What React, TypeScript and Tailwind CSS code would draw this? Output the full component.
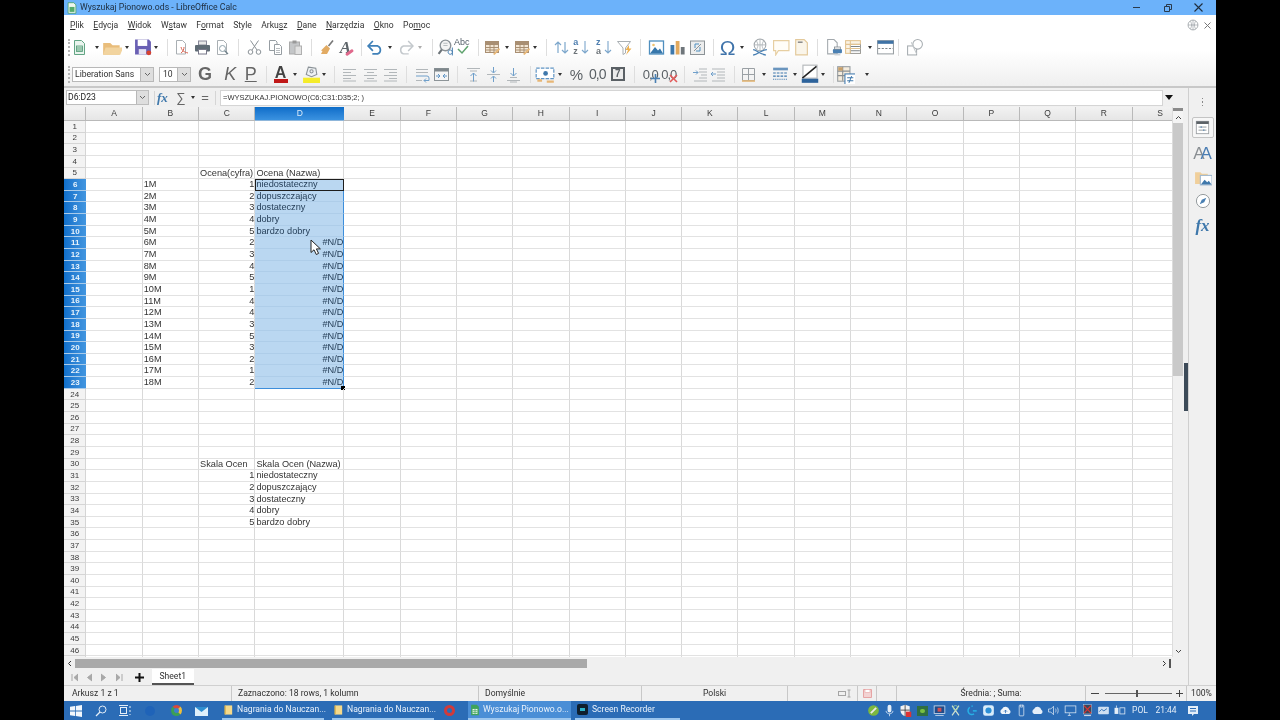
import React from "react";

const GRID_COLS = "grid grid-cols-[22.4px_repeat(3,56.33px)_89px_repeat(15,56.3px)] w-max";
const COLS = ["A","B","C","D","E","F","G","H","I","J","K","L","M","N","O","P","Q","R","S"];

const Ico = ({ s = 17, children }: { s?: number; children: React.ReactNode }) => (
  <svg width={s} height={s} viewBox="0 0 17 17" fill="none" className="shrink-0">{children}</svg>
);
const Sep = () => <div className="w-px h-[17px] bg-[#dedede]" />;
const Drop = () => <div className="w-0 h-0 border-x-[2.5px] border-x-transparent border-t-[3px] border-t-[#333]" />;

type Item = [number, React.ReactNode];
function Strip({ items, start, end }: { items: Item[]; start: number; end: number }) {
  return (
    <div className="flex items-center h-full">
      {items.map(([cx, node], i) => {
        const l = i === 0 ? start : (items[i - 1][0] + cx) / 2;
        const r = i === items.length - 1 ? end : (items[i + 1][0] + cx) / 2;
        return (
          <div key={i} className="flex items-center justify-center shrink-0" style={{ width: r - l }}>
            {node}
          </div>
        );
      })}
    </div>
  );
}

const lines = (ys: [number, number, number][], c = "#b2b7ba") =>
  ys.map(([y, a, b], i) => <path key={i} d={`M${a} ${y}H${b}`} stroke={c} />);

const TableEdit = () => (
  <Ico>
    <rect x="1.5" y="2.5" width="13" height="11" fill="#f3e7d5" stroke="#a98f73" />
    <path d="M1.5 5.5H14.5M1.5 8.5H14.5M1.5 11H14.5M6 3V13M10 3V13" stroke="#a98f73" />
    <rect x="1.5" y="2.5" width="13" height="2.5" fill="#a98f73" />
    <path d="M9 15L15 9L16 10.5L10.5 16Z" fill="#e8b878" />
  </Ico>
);

const Arrow = ({ d }: { d: string }) => <path d={d} stroke="#6f9fca" strokeWidth="1" />;

const LI = "font-['Liberation_Sans',sans-serif]";
const UI = "font-['Roboto','Noto_Sans',sans-serif]";

const row1: Item[] = [
  [81, <Ico><path d="M3.5 1.5H10.5L13.5 4.5V15.5H3.5Z" fill="#eaf4ee" stroke="#63a585" /><rect x="5.5" y="7" width="6" height="5.5" fill="#cfe6d8" stroke="#4f9a74" strokeWidth=".8" /><path d="M5.5 9H11.5M5.5 11H11.5" stroke="#4f9a74" strokeWidth=".8" /></Ico>],
  [97, <Drop />],
  [112, <Ico s={20}><path d="M1 5H7L9 7H15V15H1Z" fill="#e9bd7b" /><path d="M3 9H18L15.5 15H1Z" fill="#f2d49f" /></Ico>],
  [127, <Drop />],
  [143, <Ico s={18}><path d="M1 1.5H14L16 3.5V15.5H1Z" fill="#6a60b4" /><rect x="3.5" y="1.5" width="9" height="6" fill="#fff" /><rect x="4.5" y="10.5" width="7" height="5" fill="#e4e2f2" /><circle cx="14" cy="14" r="2.3" fill="#d8422f" /></Ico>],
  [157, <Drop />],
  [167, <Sep />],
  [179, <Ico><path d="M3.5 1.5H9.5L12.5 4.5V15H3.5Z" fill="#fff" stroke="#a9afb3" /><path d="M8 8C9 12 11 13 15 14M8 14C10 13 11 10 11 8" stroke="#d8614f" /></Ico>],
  [202, <Ico><rect x="4.5" y="2" width="8" height="4" fill="#e8e8e8" stroke="#889" /><rect x="1" y="6" width="15" height="6.5" rx="1" fill="#5f6b75" /><rect x="4.5" y="10.5" width="8" height="4.5" fill="#fff" stroke="#778" /></Ico>],
  [225, <Ico><path d="M3.5 1.5H9.5L12.5 4.5V15.5H3.5Z" fill="#fff" stroke="#a9afb3" /><circle cx="8.5" cy="9.5" r="3" stroke="#8fa2ab" /><path d="M10.7 11.7L14 15" stroke="#6f8089" strokeWidth="1.3" /></Ico>],
  [238, <Sep />],
  [252, <Ico><path d="M4.5 1.5L11 11M12.5 1.5L6 11" stroke="#8a9196" /><circle cx="4.5" cy="13" r="2.3" stroke="#8a9196" /><circle cx="12.5" cy="13" r="2.3" stroke="#8a9196" /></Ico>],
  [275, <Ico><path d="M2.5 1.5H8.5L10 3V11.5H2.5Z" fill="#fff" stroke="#969da2" /><path d="M7.5 5.5H12.5L14.5 7.5V15.5H7.5Z" fill="#fff" stroke="#969da2" /><path d="M9 9.5H13M9 11.5H13M9 13.5H13" stroke="#b8bdc0" /></Ico>],
  [298, <Ico><rect x="2.5" y="3" width="10" height="12" fill="#c4c6c8" stroke="#aaa" /><rect x="5.5" y="1.5" width="4" height="3" fill="#999" /><rect x="8" y="7" width="6.5" height="8.5" fill="#e2e2e2" stroke="#b0b0b0" /></Ico>],
  [312, <Sep />],
  [325, <Ico><path d="M14 1.5L9.5 7" stroke="#777" strokeWidth="1.6" /><path d="M7.5 6L11 9.5L8 15H2L3.5 12L2 11.5Z" fill="#e2ab63" /></Ico>],
  [348, <div className="relative w-[17px] h-[17px] text-[17px] leading-[17px] font-bold italic text-[#5f666b] font-['Liberation_Serif',serif] text-center">A<div className="absolute right-0 bottom-[2px] w-[9px] h-[3px] -rotate-[35deg] bg-[#e0698c] rounded-sm" /></div>],
  [361, <Sep />],
  [375, <Ico s={18}><path d="M2.5 7.5H11A4 4 0 0 1 11 15H6" stroke="#3f80b8" strokeWidth="1.6" /><path d="M6.5 2.8L2 7.5L6.5 12.2" stroke="#3f80b8" strokeWidth="1.6" /></Ico>],
  [390, <Drop />],
  [405, <Ico s={18}><path d="M15.5 7.5H7A4 4 0 0 0 7 15H12" stroke="#c3c8cc" strokeWidth="1.4" /><path d="M11.5 2.8L16 7.5L11.5 12.2" stroke="#c3c8cc" strokeWidth="1.4" /></Ico>],
  [421, <div className="opacity-40"><Drop /></div>],
  [432, <Sep />],
  [443, <Ico s={18}><circle cx="8" cy="7" r="5" fill="#f4f4f4" stroke="#8b9297" strokeWidth="1.3" /><path d="M4.5 11L1.5 15" stroke="#6d7479" strokeWidth="2" /><path d="M6 5H10M6 7H10" stroke="#b8bdc0" /><path d="M14.5 9V16.5M14.5 13.5A2 2 0 1 0 14.4 14" stroke="#3f78ab" strokeWidth=".9" /></Ico>],
  [465, <div className="relative w-[18px] h-[18px]"><span className={`absolute -top-[2px] left-0 text-[9px] ${LI} text-[#55606a]`}>Abc</span><svg width="18" height="18" className="absolute left-0 top-0" fill="none"><path d="M4 11L8 15L14 8" stroke="#5fa36e" strokeWidth="1.5" /></svg></div>],
  [478, <Sep />],
  [492, <TableEdit />],
  [507, <Drop />],
  [522, <TableEdit />],
  [537, <Drop />],
  [545, <Sep />],
  [559, <Ico><path d="M5 14V3M2 6L5 3L8 6" stroke="#7da7cc" strokeWidth="1.2" /><path d="M12 3V14M9 11L12 14L15 11" stroke="#7da7cc" strokeWidth="1.2" /></Ico>],
  [581, <div className={`relative w-[18px] h-[18px] ${LI} text-[#4f7fb0] text-[9px] leading-[8px] font-semibold`}><span className="absolute left-[1px] top-0">a</span><span className="absolute left-[1px] top-[9px] text-[#6d7479]">z</span><svg width="18" height="18" fill="none" className="absolute left-0 top-0"><path d="M13 3V15M10 12L13 15L16 12" stroke="#7da7cc" strokeWidth="1.1" /></svg></div>],
  [604, <div className={`relative w-[18px] h-[18px] ${LI} text-[#4f7fb0] text-[9px] leading-[8px] font-semibold`}><span className="absolute left-[1px] top-0">z</span><span className="absolute left-[1px] top-[9px] text-[#6d7479]">a</span><svg width="18" height="18" fill="none" className="absolute left-0 top-0"><path d="M13 3V15M10 12L13 15L16 12" stroke="#7da7cc" strokeWidth="1.1" /></svg></div>],
  [627, <Ico><path d="M1.5 2.5H14.5L9.5 9V14L7 15.5V9Z" fill="#fff" stroke="#a9afb3" /><path d="M13 6L9.5 11H12L10 16L15.5 9.5H13Z" fill="#eeb04e" /></Ico>],
  [640, <Sep />],
  [655, <Ico><rect x="1.5" y="2" width="14" height="13" fill="#fff" stroke="#4f8fbf" strokeWidth="1.3" /><path d="M2 14.5L7 8L10 11.5L12 9.5L15 14.5Z" fill="#3777ab" /><circle cx="5.5" cy="6" r="1.3" fill="#f1c36e" /></Ico>],
  [677, <Ico><rect x="1.5" y="6" width="3.8" height="9.5" fill="#3d78ac" /><rect x="6.7" y="2" width="3.8" height="13.5" fill="#e2a95e" /><rect x="11.8" y="8" width="3.8" height="7.5" fill="#6f767b" /></Ico>],
  [700, <Ico><rect x="1.5" y="2" width="14" height="13.5" fill="#eceded" stroke="#8c9397" /><path d="M6 9V5H10M11 8V12H7" stroke="#4f8fbf" /><path d="M5 12L12 5" stroke="#8c9397" /></Ico>],
  [714, <Sep />],
  [727, <span className={`text-[#3f73aa] text-[21px] leading-[21px] ${LI}`}>Ω</span>],
  [742, <Drop />],
  [758, <Ico s={18}><circle cx="8.5" cy="6.5" r="5.5" stroke="#a2a8ac" /><path d="M3 6.5H14M8.5 1V12M5 2.5C7 6 7 8 5 11M12 2.5C10 6 10 8 12 11" stroke="#a2a8ac" strokeWidth=".7" /><path d="M2 11C5 11 9 16 14 16M2 16C6 16 10 11 15 11" stroke="#4a80b3" strokeWidth="1.3" /></Ico>],
  [781, <Ico s={18}><path d="M1.5 2.5H16V12H6L3.5 16V12H1.5Z" fill="#fffdf8" stroke="#e7cfa2" strokeWidth="1.1" /></Ico>],
  [803, <Ico s={18}><path d="M3.5 1.5H11.5L14.5 4.5V16H3.5Z" fill="#faf5ea" stroke="#e3c99b" strokeWidth="1.1" /><path d="M5.5 4H10" stroke="#8d8d8d" strokeWidth="1.5" /></Ico>],
  [818, <Sep />],
  [832, <Ico s={18}><path d="M2.5 1.5H8.5L11.5 4.5V15H2.5Z" fill="#fff" stroke="#a3a9ad" /><rect x="7.5" y="10.5" width="8.5" height="4" rx="1" fill="#4a80b3" /><rect x="9" y="8.5" width="5.5" height="2" fill="#fff" stroke="#7d8488" strokeWidth=".7" /><path d="M9 15H14.5V16.5H9Z" fill="#cfd4d8" /></Ico>],
  [855, <Ico s={18}><rect x="1.5" y="2.5" width="14" height="12" fill="#fbf3e4" stroke="#e2c391" /><rect x="6" y="6" width="9.5" height="8.5" fill="#fff" stroke="#8b8f92" strokeWidth=".8" /><path d="M1.5 6H15.5M1.5 10H15.5M6 2.5V14.5" stroke="#e2c391" /><path d="M6.5 8H15M6.5 12H15" stroke="#7d8488" /></Ico>],
  [869, <Drop />],
  [885, <Ico s={18}><rect x="1.5" y="2.5" width="15" height="12.5" fill="#fff" stroke="#9aa0a4" /><rect x="1.5" y="2.5" width="15" height="3" fill="#3f73a6" /><path d="M2 10H16" stroke="#7d8488" strokeDasharray="2 1.4" /></Ico>],
  [899, <Sep />],
  [912, <Ico s={18}><rect x="1.5" y="7.5" width="8.5" height="8.5" fill="#fff" stroke="#a7adb1" /><circle cx="11" cy="6" r="4.5" fill="#fff" stroke="#a7adb1" /><path d="M5 4L10 15" stroke="#c3c8cb" /></Ico>],
];

const LineIco = ({ ys, arrow }: { ys: [number, number, number][]; arrow?: string }) => (
  <Ico>{lines(ys)}{arrow ? <Arrow d={arrow} /> : null}</Ico>
);

const row2: Item[] = [
  [208, <span className={`text-[18px] font-bold text-[#666] leading-none ${LI}`}>G</span>],
  [230, <span className={`text-[18px] italic text-[#666] leading-none ${LI}`}>K</span>],
  [253, <span className={`text-[18px] underline text-[#666] leading-none ${LI}`}>P</span>],
  [267, <Sep />],
  [280, <div className="relative w-[17px] h-[19px] flex justify-center"><span className={`text-[16px] leading-[15px] font-bold text-[#444] ${LI}`}>A</span><div className="absolute bottom-[1px] left-0 w-full h-[4px] bg-[#c01818]" /></div>],
  [295, <Drop />],
  [311, <Ico s={18}><path d="M6 2L13 3L14 9L9 11L4 9Z" fill="#eef1f3" stroke="#8a9196" /><circle cx="9" cy="6" r="1.5" stroke="#8a9196" /><rect x="1" y="12" width="16" height="5" fill="#f5ec2a" /></Ico>],
  [325, <Drop />],
  [333, <Sep />],
  [347, <LineIco ys={[[3.5,2,15],[6.5,2,10],[9.5,2,15],[12.5,2,10],[15,2,15]]} />],
  [370, <LineIco ys={[[3.5,2,15],[6.5,5,12],[9.5,2,15],[12.5,5,12],[15,2,15]]} />],
  [393, <LineIco ys={[[3.5,2,15],[6.5,7,15],[9.5,2,15],[12.5,7,15],[15,2,15]]} />],
  [407, <Sep />],
  [420, <LineIco ys={[[3.5,2,14],[6.5,2,14],[14.5,2,8]]} arrow="M2 10H13Q15 10 15 12V14.5H10M12 12.5L10 14.5L12 16.5" />],
  [443, <Ico><rect x="1.5" y="2.5" width="14" height="12" fill="#f5f5f5" stroke="#8d9498" /><rect x="1.5" y="2.5" width="14" height="3" fill="#7f878c" /><path d="M3 10H7M5 8L7 10L5 12M14 10H10M12 8L10 10L12 12" stroke="#5f94c4" /></Ico>],
  [458, <Sep />],
  [471, <LineIco ys={[[2.5,2,15],[5,5,12],[15,5,12]]} arrow="M8.5 15.5V7M5.5 10L8.5 7L11.5 10" />],
  [493, <LineIco ys={[[8.5,2,15]]} arrow="M8.5 1V6.5M6 4.5L8.5 7L11 4.5M8.5 16V10.5M6 12.5L8.5 10L11 12.5" />],
  [516, <LineIco ys={[[11.5,5,12],[14.5,2,15],[16,5,12]]} arrow="M8.5 2V10M5.5 7L8.5 10L11.5 7" />],
  [530, <Sep />],
  [545, <Ico s={20}><rect x="1" y="3.5" width="15" height="9" fill="#fff" stroke="#5f94c4" strokeDasharray="3 1" /><circle cx="9" cy="8" r="2" fill="#3f78ab" /><path d="M2 14H6M10 15H16" stroke="#e7b675" strokeWidth="2" /></Ico>],
  [559, <Drop />],
  [575, <span className={`text-[15px] leading-none text-[#5a6065] ${LI}`}>%</span>],
  [597, <span className={`text-[14px] leading-none text-[#5a6065] ${LI} tracking-[-1px]`}>0,0</span>],
  [620, <div className={`w-[14px] h-[14px] border-2 border-[#5a6065] bg-[#ebebeb] flex items-center justify-center text-[10px] leading-none font-bold text-[#5a6065] ${LI}`}>7</div>],
  [634, <Sep />],
  [648, <div className={`relative text-[13px] leading-none text-[#5a6065] ${LI} tracking-[-1px]`}>0,0<svg width="9" height="9" fill="none" className="absolute -right-[2px] -bottom-[2px]"><path d="M4.5 0V9M0 4.5H9" stroke="#4a80b3" strokeWidth="1.6" /></svg></div>],
  [671, <div className={`relative text-[13px] leading-none text-[#5a6065] ${LI} tracking-[-1px]`}>0,0<svg width="9" height="9" fill="none" className="absolute -right-[2px] -bottom-[2px]"><path d="M1 1L8 8M8 1L1 8" stroke="#e25a5a" strokeWidth="1.6" /></svg></div>],
  [685, <Sep />],
  [698, <LineIco ys={[[3,7,15],[6,7,15],[9,9,15],[12,7,15],[15,2,15]]} arrow="M1 6.5H6M4 4.5L6 6.5L4 8.5" />],
  [721, <LineIco ys={[[3,2,15],[6,7,15],[9,7,15],[12,7,15],[15,2,15]]} arrow="M6 8H1M3 6L1 8L3 10" />],
  [735, <Sep />],
  [748, <Ico><path d="M2.5 2.5H14.5V14.5H2.5ZM8.5 2.5V14.5M2.5 8.5H14.5" stroke="#9aa0a4" /><path d="M2 15H15" stroke="#e3b675" strokeWidth="1.6" /></Ico>],
  [764, <Drop />],
  [781, <Ico s={18}><path d="M2 3H16M2 4.5H16" stroke="#3d76ac" /><path d="M2 7.5H16M2 10.5H16" stroke="#3d76ac" strokeDasharray="2.5 1" /><path d="M2 13.5H16" stroke="#3d76ac" strokeDasharray="1 1" /></Ico>],
  [795, <Drop />],
  [809, <Ico s={20}><rect x="2.5" y="1" width="12" height="11" fill="#fff" stroke="#b6babd" /><path d="M2 12L14 2" stroke="#222" strokeWidth="1.3" /><rect x="1.5" y="12.5" width="14" height="3.5" fill="#2d639b" /></Ico>],
  [825, <Drop />],
  [832, <Sep />],
  [845, <Ico s={19}><rect x="1.5" y="1.5" width="11" height="13" fill="#f5ecdd" stroke="#9aa0a4" /><path d="M1.5 5.5H12.5M1.5 9.5H12.5M6 1.5V14" stroke="#8a8f92" /><rect x="2" y="2" width="4" height="3" fill="#c9a06a" /><rect x="8" y="8" width="9.5" height="9.5" fill="#fff" stroke="#4a80b3" /><path d="M10 11.5H15.5M10 14H15.5M14 10L11.5 16" stroke="#3f78ab" strokeWidth=".9" /></Ico>],
  [861, <Drop />],
];

function MenuItem({ pre, u, post }: { pre?: string; u?: string; post?: string }) {
  return <span>{pre}{u ? <span className="underline">{u}</span> : null}{post}</span>;
}

const bVals: Record<number, string> = {};
for (let i = 0; i < 18; i++) bVals[6 + i] = `${i + 1}M`;
const cVals: Record<number, string> = {};
[1,2,3,4,5,2,3,4,5,1,4,4,3,5,3,2,1,2].forEach((v, i) => (cVals[6 + i] = String(v)));
const names = ["niedostateczny","dopuszczający","dostateczny","dobry","bardzo dobry"];

function cellText(r: number, c: number): { t: string; right?: boolean } | null {
  if (c === 1 && bVals[r]) return { t: bVals[r] };
  if (c === 2) {
    if (r === 5) return { t: "Ocena(cyfra)" };
    if (r === 30) return { t: "Skala Ocen" };
    if (cVals[r]) return { t: cVals[r], right: true };
    if (r >= 31 && r <= 35) return { t: String(r - 30), right: true };
  }
  if (c === 3) {
    if (r === 5) return { t: "Ocena (Nazwa)" };
    if (r === 30) return { t: "Skala Ocen (Nazwa)" };
    if (r >= 6 && r <= 10) return { t: names[r - 6] };
    if (r >= 11 && r <= 23) return { t: "#N/D", right: true };
    if (r >= 31 && r <= 35) return { t: names[r - 31] };
  }
  return null;
}

function SheetGrid() {
  const rows = Array.from({ length: 47 }, (_, i) => i + 1);
  return (
    <div className="relative flex-1 overflow-hidden bg-white">
      <div className={`${GRID_COLS} h-[14px] ${LI} text-[8.5px] text-[#3a3a3a]`}>
        <div className="bg-gradient-to-b from-[#f2f2f2] to-[#e6e6e6] border-r border-b border-[#b9b9b9]" />
        {COLS.map((c) =>
          c === "D" ? (
            <div key={c} className="bg-gradient-to-b from-[#0b6dc9] to-[#3a92e0] text-[#dcecfa] border-b border-[#8fb6da] flex items-center justify-center">{c}</div>
          ) : (
            <div key={c} className="bg-gradient-to-b from-[#f2f2f2] to-[#e6e6e6] border-r border-b border-[#b9b9b9] flex items-center justify-center">{c}</div>
          )
        )}
      </div>
      <div className={`${GRID_COLS} auto-rows-[11.65px] ${LI} text-[9.2px] leading-[11px] text-[#333]`}>
        {rows.flatMap((r) => {
          const sel = r >= 6 && r <= 23;
          return [
            <div
              key={`h${r}`}
              className={
                sel
                  ? "bg-gradient-to-r from-[#0f6fca] to-[#4296e0] text-[#eaf4fc] font-bold text-[8px] flex items-center justify-center border-b border-[#a9cbea]"
                  : "bg-[#f3f3f3] text-[#3a3a3a] text-[8px] flex items-center justify-center border-r border-b border-[#d5d5d5]"
              }
            >
              {r}
            </div>,
            ...COLS.map((_, c) => {
              const ct = cellText(r, c);
              const isD = c === 3 && sel;
              const isCSel = c === 2 && sel;
              const first = isD && r === 6;
              const last = isD && r === 23;
              return (
                <div
                  key={`${r}-${c}`}
                  className={[
                    "relative whitespace-nowrap pl-[1px]",
                    ct?.right ? "text-right" : "text-left",
                    isD ? "bg-[#bad7f1] border-r border-r-[#3d8edb] text-[#27405a]" : "border-r border-r-[#d9d9d9]",
                    last ? "border-b border-b-[#3d8edb]" : isD ? "border-b border-b-[#aecde9]" : "border-b border-b-[#e2e2e2]",
                    isCSel ? "border-r-[#3d8edb]" : "",
                    first ? "outline-[1.5px] outline-solid outline-[#1d1d1d] -outline-offset-1 z-10" : "",
                  ].join(" ")}
                >
                  {ct?.t}
                  {last ? <div className="absolute -right-[2px] -bottom-[2px] w-[4px] h-[4px] bg-black" /> : null}
                </div>
              );
            }),
          ];
        })}
      </div>
      {/* mouse pointer */}
      <svg width="13" height="17" viewBox="0 0 13 17" className="absolute left-[246px] top-[132px] z-20">
        <path d="M1 1V13.5L4 10.8L6.3 15.5L8.6 14.4L6.4 9.9H10.4Z" fill="#fff" stroke="#222" strokeWidth="1" />
      </svg>
    </div>
  );
}

function VScroll() {
  return (
    <div className="w-[11px] shrink-0 flex flex-col bg-[#f0f0f0] border-l border-[#dcdcdc]">
      <div className="h-[3px] mt-[1px] bg-[#8a8a8a]" />
      <div className="h-[12px] flex items-center justify-center bg-[#f4f4f4]">
        <svg width="7" height="5" fill="none"><path d="M1 4L3.5 1.5L6 4" stroke="#444" /></svg>
      </div>
      <div className="h-[253px] bg-[#c9c9c9]" />
      <div className="flex-1" />
      <div className="h-[12px] flex items-center justify-center">
        <svg width="7" height="5" fill="none"><path d="M1 1L3.5 3.5L6 1" stroke="#444" /></svg>
      </div>
    </div>
  );
}

function Sidebar() {
  return (
    <div className="w-[28px] shrink-0 bg-[#f0f0f0] border-l border-[#cfcfcf] flex flex-col items-center">
      <div className="h-[30px] flex flex-col items-center justify-center gap-[2px] mt-[-1px]">
        <div className="w-[1.5px] h-[1.5px] bg-[#888]" />
        <div className="w-[1.5px] h-[1.5px] bg-[#888]" />
        <div className="w-[1.5px] h-[1.5px] bg-[#888]" />
      </div>
      <div className="w-[22px] h-[21px] border border-[#c4c4c4] rounded-[2px] bg-[#f7f7f7] flex items-center justify-center">
        <Ico s={15}><rect x="1.5" y="1.5" width="14" height="14" fill="#fff" stroke="#9b9fa2" /><rect x="1.5" y="1.5" width="14" height="3" fill="#5b6166" /><path d="M4 8H13M4 11.5H13" stroke="#8a8f93" /><path d="M7 7V9M10 10.5V12.5" stroke="#4a80b3" /></Ico>
      </div>
      <div className={`mt-[3px] h-[24px] flex items-center text-[17px] leading-none ${LI} text-[#4a7db3] tracking-[-4px] pr-[4px]`}><span className="text-[#8a8f93]">A</span><span>A</span></div>
      <div className="h-[24px] flex items-center">
        <Ico s={18}><path d="M1 4H6L7.5 5.5H13V15H1Z" fill="#f0cf9b" /><rect x="6" y="7" width="11" height="9" fill="#fff" stroke="#9fb8cf" /><path d="M6.5 15.5L10 11L12.5 13.5L14 12L16.5 15.5Z" fill="#3f78ab" /></Ico>
      </div>
      <div className="h-[23px] flex items-center">
        <Ico s={16}><circle cx="8.5" cy="8.5" r="7" fill="#fff" stroke="#8f9599" /><path d="M12 5L9.8 9.8L5 12L7.2 7.2Z" fill="#4a80b3" /></Ico>
      </div>
      <div className="h-[26px] flex items-center text-[17px] italic font-bold text-[#3f78ab] font-['Liberation_Serif',serif] leading-none">fx</div>
    </div>
  );
}

const tray: Item[] = [
  [874, <Ico s={13}><circle cx="8.5" cy="8.5" r="7" fill="#7cb83f" /><path d="M5 12L12 5" stroke="#e8e8e8" strokeWidth="2.4" /></Ico>],
  [889, <Ico s={13}><rect x="6" y="1" width="5" height="10" rx="2.5" fill="#e4eef8" /><path d="M4 9C4 14 13 14 13 9M8.5 13V16" stroke="#e4eef8" /></Ico>],
  [905, <Ico s={13}><path d="M2 3L8 1L14 3V9C14 12 11 15 8 16C5 15 2 12 2 9Z" fill="#f2f2f2" /><path d="M8 1V16M2 8H14" stroke="#2a2a2a" /><rect x="9" y="10" width="7" height="7" fill="#d33" /></Ico>],
  [923, <div className="w-[11px] h-[10px] bg-[#2f6f42] flex items-center justify-center"><div className="w-[5px] h-[4px] rounded-full bg-[#78c043]" /></div>],
  [939, <Ico s={13}><rect x="1.5" y="2.5" width="14" height="10" fill="#1f4c8a" stroke="#d9e5f2" /><rect x="6" y="5" width="5" height="5" fill="#d34f4f" /><path d="M3 15H14" stroke="#d9e5f2" /></Ico>],
  [956, <Ico s={13}><path d="M4 2L13 15M13 2L4 15" stroke="#cfe1cf" strokeWidth="1.6" /><circle cx="8.5" cy="5" r="3" stroke="#9fd09f" /></Ico>],
  [972, <Ico s={13}><path d="M8 2V3.5M10.5 13A5 5 0 1 1 5 4.5" stroke="#27b0e6" strokeWidth="2" /><path d="M9 9H14" stroke="#27b0e6" strokeWidth="2" /></Ico>],
  [988, <Ico s={13}><rect x="1.5" y="1.5" width="14" height="14" rx="3" fill="#d8ecfa" /><circle cx="8.5" cy="8.5" r="4" fill="#2b8fd6" /></Ico>],
  [1005, <Ico s={13}><path d="M4 13A3.5 3.5 0 0 1 4 6.5A5 5 0 0 1 13.5 7.5A3 3 0 0 1 13 13Z" fill="#f0f5fa" /><path d="M8.5 12V8M6.5 10L8.5 8L10.5 10" stroke="#2b6cb5" /></Ico>],
  [1022, <Ico s={13}><rect x="5.5" y="1.5" width="6" height="14" rx="1" stroke="#d9e5f2" /><path d="M7 1V4H10V1" stroke="#d9e5f2" /></Ico>],
  [1038, <Ico s={13}><path d="M4 13A3.5 3.5 0 0 1 4 6.5A5 5 0 0 1 13.5 7.5A3 3 0 0 1 13 13Z" fill="#e4eef8" /></Ico>],
  [1053, <Ico s={13}><path d="M2 6.5H5L8.5 3V14L5 10.5H2Z" stroke="#d9e5f2" /><path d="M11 6C12 7.5 12 9.5 11 11M13.5 4.5C15 7 15 10 13.5 12.5" stroke="#d9e5f2" /></Ico>],
  [1070, <Ico s={13}><rect x="1.5" y="2.5" width="14" height="9" stroke="#d9e5f2" /><path d="M5 15H9M7 12V15" stroke="#d9e5f2" /></Ico>],
  [1087, <Ico s={13}><rect x="3" y="1" width="11" height="12" fill="#38475c" stroke="#c9d6e6" strokeWidth=".6" /><path d="M4 2L13 12M13 2L4 12" stroke="#d33" strokeWidth="1.5" /><path d="M4 15H13" stroke="#c9d6e6" strokeWidth="1.6" /></Ico>],
  [1104, <Ico s={13}><rect x="1.5" y="3.5" width="14" height="10" rx="1" fill="#cfe0f2" /><path d="M3 10L6 7L9 9L13 6" stroke="#2b6cb5" strokeWidth="1.2" /></Ico>],
  [1119, <Ico s={13}><path d="M2 5H7V13H2Z" fill="#e4eef8" /><rect x="9" y="5" width="6.5" height="8" stroke="#e4eef8" /><path d="M4.5 5V2" stroke="#e4eef8" /></Ico>],
];

function TaskBtn({ kind, label, w, active }: { kind: "folder" | "calc" | "rec"; label: string; w: string; active?: boolean }) {
  return (
    <div className={`${w} shrink-0 h-full flex items-center gap-[2px] pl-[1px] border-b-2 border-b-[#9cc6ee] ${active ? "bg-[#4a8ed6]" : ""}`}>
      {kind === "folder" ? (
        <Ico s={12}><path d="M3 2H13V15H3Z" fill="#f5d98a" /><path d="M3 2V15" stroke="#e0b850" strokeWidth="2" /></Ico>
      ) : kind === "calc" ? (
        <Ico s={12}><path d="M3 1H11L14 4V16H3Z" fill="#3fa35a" /><rect x="5" y="7" width="7" height="7" fill="#e8f5ea" /><path d="M5 9.5H12M5 12H12M8.5 7V14" stroke="#3fa35a" /></Ico>
      ) : (
        <div className="w-[11px] h-[11px] rounded-[2px] bg-[#0f1f2e] flex items-center justify-center mr-[2px] ml-[1px]"><div className="w-[5px] h-[3px] bg-[#2bb2c9]" /></div>
      )}
      <span className="text-[8.6px] whitespace-nowrap text-[#eaf2fb]">{label}</span>
    </div>
  );
}

const FieldArrow = ({ w }: { w: string }) => (
  <div className={`${w} h-full bg-[#dedede] border-l border-[#b8b8b8] flex items-center justify-center`}>
    <svg width="7" height="5" fill="none"><path d="M1 1L3.5 3.5L6 1" stroke="#666" /></svg>
  </div>
);

const Handle = () => (
  <div className="w-[6px] h-[17px] flex justify-end shrink-0"><div className="w-[2px] h-full border-l-2 border-dotted border-[#b5b5b5]" /></div>
);

export default function App() {
  return (
    <div className={`w-[1280px] h-[720px] bg-black flex justify-center overflow-hidden blur-[0.3px] ${UI}`}>
      <div className="w-[1152px] h-full flex flex-col bg-[#f0f0f0]">
        {/* title bar */}
        <div className="h-[15px] shrink-0 bg-[#6cb2fa] flex items-center pl-[2px] text-[#1d2c3c]">
          <Ico s={12}><path d="M3 1H11L14 4V16H3Z" fill="#eef7ef" stroke="#3c9a55" /><rect x="5" y="7" width="7" height="7" fill="#55ac6c" /></Ico>
          <span className="ml-[2px] text-[8.7px] whitespace-nowrap">Wyszukaj Pionowo.ods - LibreOffice Calc</span>
          <div className="ml-auto flex items-center">
            <div className="w-[31px] flex justify-center"><div className="w-[7px] h-px bg-[#2a3a4c]" /></div>
            <div className="w-[31px] flex justify-center">
              <svg width="8" height="8" fill="none"><path d="M2.5 2V.5H7.5V5.5H6M.5 2.5H5.5V7.5H.5Z" stroke="#2a3a4c" /></svg>
            </div>
            <div className="w-[31px] flex justify-center mr-[2px]">
              <svg width="9" height="9" fill="none"><path d="M.5.5L8.5 8.5M8.5.5L.5 8.5" stroke="#1f2d3d" strokeWidth="1.1" /></svg>
            </div>
          </div>
        </div>
        {/* toolbar block */}
        <div className="h-[73px] shrink-0 bg-gradient-to-b from-white via-white to-[#efefef] border-b-2 border-[#c8c8c8] flex flex-col">
          <div className="h-[20px] shrink-0 flex items-center pl-[6px] gap-[9.4px] text-[8.6px] text-[#333] whitespace-nowrap">
            <MenuItem u="P" post="lik" />
            <MenuItem u="E" post="dycja" />
            <MenuItem u="W" post="idok" />
            <MenuItem pre="W" u="s" post="taw" />
            <MenuItem pre="F" u="o" post="rmat" />
            <MenuItem post="Style" />
            <MenuItem pre="Arku" u="s" post="z" />
            <MenuItem u="D" post="ane" />
            <MenuItem u="N" post="arzędzia" />
            <MenuItem u="O" post="kno" />
            <MenuItem pre="Po" u="m" post="oc" />
            <div className="ml-auto flex items-center gap-[5px] pr-[5px]">
              <Ico s={12}><circle cx="8.5" cy="8.5" r="7" stroke="#8a9196" /><path d="M1.5 8.5H15.5M8.5 1.5V15.5M5 3C7 7 7 10 5 14M12 3C10 7 10 10 12 14" stroke="#8a9196" strokeWidth=".8" /></Ico>
              <svg width="7" height="7" fill="none"><path d="M.5.5L6.5 6.5M6.5.5L.5 6.5" stroke="#777" /></svg>
            </div>
          </div>
          <div className="h-[24px] shrink-0 flex items-center">
            <Handle />
            <Strip items={row1} start={70} end={925} />
          </div>
          <div className="h-[27px] shrink-0 pt-[3px] flex items-center">
            <Handle />
            <div className={`ml-[2px] w-[82px] h-[15px] shrink-0 flex items-center bg-white border border-[#b8b8b8] text-[8.6px] text-[#333] pl-[2px] ${UI}`}>
              <span className="flex-1">Liberation Sans</span>
              <FieldArrow w="w-[13px]" />
            </div>
            <div className={`ml-[5px] w-[32px] h-[15px] shrink-0 flex items-center bg-white border border-[#b8b8b8] text-[8.6px] text-[#333] pl-[3px] ${UI}`}>
              <span className="flex-1">10</span>
              <FieldArrow w="w-[13px]" />
            </div>
            <Strip items={row2} start={191} end={880} />
          </div>
        </div>
        {/* body */}
        <div className="flex-1 min-h-0 flex">
          <div className="w-[1120px] shrink-0 flex flex-col">
            {/* formula bar */}
            <div className="h-[19px] shrink-0 flex items-center bg-[#f0f0f0]">
              <div className={`ml-[2px] w-[83px] h-[15px] shrink-0 flex items-center bg-white border border-[#bdbdbd] text-[8.6px] text-[#222] pl-[1px] ${UI}`}>
                <span className="flex-1">D6:D23</span>
                <FieldArrow w="w-[12px]" />
              </div>
              <div className="w-[5px] shrink-0" />
              <div className="w-px h-[14px] bg-[#d5d5d5] shrink-0" />
              <div className="w-[2px] shrink-0" />
              <span className="w-[14px] shrink-0 italic font-bold text-[13px] leading-none text-[#3f78ab] font-['Liberation_Serif',serif]">fx</span>
              <span className={`w-[16px] ml-[2px] shrink-0 text-center text-[13px] leading-none text-[#666] ${LI}`}>∑</span>
              <div className="w-[8px] shrink-0 flex justify-center"><Drop /></div>
              <span className={`w-[16px] shrink-0 text-center text-[13px] leading-none text-[#666] ${LI}`}>=</span>
              <div className="w-[2px] shrink-0" />
              <div className="w-px h-[14px] bg-[#d5d5d5] shrink-0" />
              <div className={`ml-[4px] w-[943px] h-[16px] shrink-0 bg-white border border-[#d5d5d5] flex items-center pl-[2px] text-[7.5px] text-[#333] ${LI}`}>=WYSZUKAJ.PIONOWO(C6;C31:D35;2; )</div>
              <div className="flex-1 flex justify-center mr-[10px]"><div className="w-0 h-0 border-x-[4.5px] border-x-transparent border-t-[5px] border-t-[#111]" /></div>
            </div>
            <div className="flex-1 min-h-0 flex">
              <SheetGrid />
              <VScroll />
              <div className="w-[1px] shrink-0" />
            </div>
            {/* hscroll */}
            <div className="h-[12px] shrink-0 flex items-center bg-[#f0f0f0]">
              <div className="w-[11px] flex justify-center"><svg width="5" height="7" fill="none"><path d="M4 1L1.5 3.5L4 6" stroke="#333" /></svg></div>
              <div className="w-[512px] h-[9px] bg-[#a9a9a9]" />
              <div className="flex-1" />
              <div className="w-[10px] flex justify-center"><svg width="5" height="7" fill="none"><path d="M1 1L3.5 3.5L1 6" stroke="#333" /></svg></div>
              <div className="w-[2px] h-[9px] bg-[#555]" />
              <div className="w-[13px]" />
            </div>
            {/* tabs */}
            <div className="h-[16px] shrink-0 flex items-center bg-[#f0f0f0]">
              <div className="w-[3px]" />
              {[
                "M3 1V8M9 1L5 4.5L9 8",
                "M8 1L3.5 4.5L8 8",
                "M3 1L7.5 4.5L3 8",
                "M9 1V8M3 1L7 4.5L3 8",
              ].map((d, i) => (
                <div key={i} className="w-[14.7px] flex justify-center">
                  <svg width="11" height="9"><path d={d} stroke="#a8a8a8" fill="#a8a8a8" /></svg>
                </div>
              ))}
              <div className="w-[8px]" />
              <svg width="11" height="11" fill="none"><path d="M5.5 1V10M1 5.5H10" stroke="#111" strokeWidth="2" /></svg>
              <div className="w-[7px]" />
              <div className={`w-[42px] h-[16px] bg-white border-b-2 border-[#555] flex items-center justify-center text-[8.6px] text-[#333] ${UI}`}>Sheet1</div>
            </div>
          </div>
          {/* splitter */}
          <div className="w-[4px] shrink-0 flex items-center bg-[#f0f0f0]">
            <div className="w-[4px] h-[48px] bg-[#3c4a58]" />
          </div>
          <Sidebar />
        </div>
        {/* status */}
        <div className="h-[16px] shrink-0 bg-[#f0f0f0] border-t border-[#d0d0d0] flex items-center text-[8.6px] text-[#2f2f2f] whitespace-nowrap">
          <div className="w-[168px] pl-[8px] border-r border-[#c8c8c8] h-full flex items-center">Arkusz 1 z 1</div>
          <div className="w-[247px] pl-[6px] border-r border-[#c8c8c8] h-full flex items-center">Zaznaczono: 18 rows, 1 kolumn</div>
          <div className="w-[163px] pl-[6px] border-r border-[#c8c8c8] h-full flex items-center">Domyślnie</div>
          <div className="w-[146px] border-r border-[#c8c8c8] h-full flex items-center justify-center">Polski</div>
          <div className="w-[70px] h-full flex items-center justify-end border-r border-[#c8c8c8] pr-[6px] text-[#999]">
            <svg width="13" height="9" fill="none"><rect x=".5" y="2.5" width="7" height="4" stroke="#a5a5a5" /><path d="M11 1V8M9.5 1H12.5M9.5 8H12.5" stroke="#a5a5a5" /></svg>
          </div>
          <div className="w-[19px] h-full flex items-center justify-center border-r border-[#c8c8c8]">
            <svg width="9" height="9" fill="none"><path d="M.5.5H8.5V8.5H.5Z" fill="#f3d3d3" stroke="#e6a4a4" /><rect x="2" y=".5" width="5" height="3" fill="#fff" stroke="#e6a4a4" strokeWidth=".6" /></svg>
          </div>
          <div className="w-[20px] h-full border-r border-[#c8c8c8]" />
          <div className="w-[189px] h-full flex items-center justify-center border-r border-[#c8c8c8]">Średnia: ; Suma:</div>
          <div className="w-[101px] h-full flex items-center border-r border-[#c8c8c8] pl-[5px]">
            <div className="w-[8px] h-px bg-[#444]" />
            <div className="w-[6px]" />
            <div className="w-[67px] h-px bg-[#666] relative"><div className="absolute left-[31px] -top-[3px] w-[2px] h-[7px] bg-[#555]" /></div>
            <div className="w-[3px]" />
            <svg width="9" height="9" fill="none"><path d="M4.5 1V8M1 4.5H8" stroke="#444" /></svg>
          </div>
          <div className="flex-1 text-center">100%</div>
        </div>
        {/* taskbar */}
        <div className={`h-[19px] shrink-0 bg-[#2b6cb6] flex items-center ${UI}`}>
          <div className="w-[24px] shrink-0 flex justify-center">
            <svg width="12" height="12" viewBox="0 0 12 12"><path d="M0 1.8L5 1V5.6H0ZM5.8 .9L12 0V5.6H5.8ZM0 6.4H5V11L0 10.2ZM5.8 6.4H12V12L5.8 11.1Z" fill="#f2f7fc" /></svg>
          </div>
          <div className="w-[25px] shrink-0 flex justify-center">
            <svg width="12" height="12" fill="none"><circle cx="7.5" cy="4.5" r="3.5" stroke="#e4eef8" /><path d="M5 7L1 11" stroke="#e4eef8" strokeWidth="1.2" /></svg>
          </div>
          <div className="w-[24px] shrink-0 flex justify-center">
            <svg width="12" height="11" fill="none"><rect x="1.5" y="2.5" width="6" height="6" stroke="#e4eef8" /><path d="M0 .5H9M0 10.5H9M11 1V3M11 5V7M11 9V10" stroke="#e4eef8" /></svg>
          </div>
          <div className="w-[26px] shrink-0 flex justify-center"><div className="w-[10px] h-[10px] rounded-full bg-[#1f63b8]" /></div>
          <div className="w-[26px] shrink-0 flex justify-center">
            <div className="w-[11px] h-[11px] rounded-full border-[3px] border-t-[#d8493a] border-r-[#eec03a] border-b-[#3c9f55] border-l-[#3c9f55] bg-[#3e7fd0]" />
          </div>
          <div className="w-[25px] shrink-0 flex justify-center">
            <svg width="13" height="10" viewBox="0 0 13 10"><rect y="1" width="13" height="9" fill="#dff0fb" /><path d="M0 1H13L6.5 6Z" fill="#2f8fd0" /></svg>
          </div>
          <div className="w-[8px] shrink-0" />
          <TaskBtn kind="folder" label="Nagrania do Nauczan..." w="w-[102px]" />
          <div className="w-[8px] shrink-0" />
          <TaskBtn kind="folder" label="Nagrania do Nauczan..." w="w-[102px]" />
          <div className="w-[16px] shrink-0 ml-[7px] flex justify-center">
            <div className="w-[11px] h-[11px] rounded-full border-[3px] border-[#d23a3a]" />
          </div>
          <div className="w-[11px] shrink-0" />
          <TaskBtn kind="calc" label="Wyszukaj Pionowo.o..." w="w-[103px]" active />
          <div className="w-[4px] shrink-0" />
          <TaskBtn kind="rec" label="Screen Recorder" w="w-[105px]" />
          <div className="ml-auto flex items-center h-full text-[8.5px] text-[#e4eef8]">
            <Strip items={tray} start={866} end={1128} />
            <div className="w-[24px] text-center">POL</div>
            <div className="w-[28px] text-center">21:44</div>
            <div className="w-[26px] flex justify-center">
              <svg width="12" height="12" fill="none"><path d="M1 1H11V9H7L5 11V9H1Z" fill="#e4eef8" /><path d="M3 3.5H9M3 6H9" stroke="#2b6cb6" /></svg>
            </div>
            <div className="w-[10px]" />
          </div>
        </div>
      </div>
    </div>
  );
}
